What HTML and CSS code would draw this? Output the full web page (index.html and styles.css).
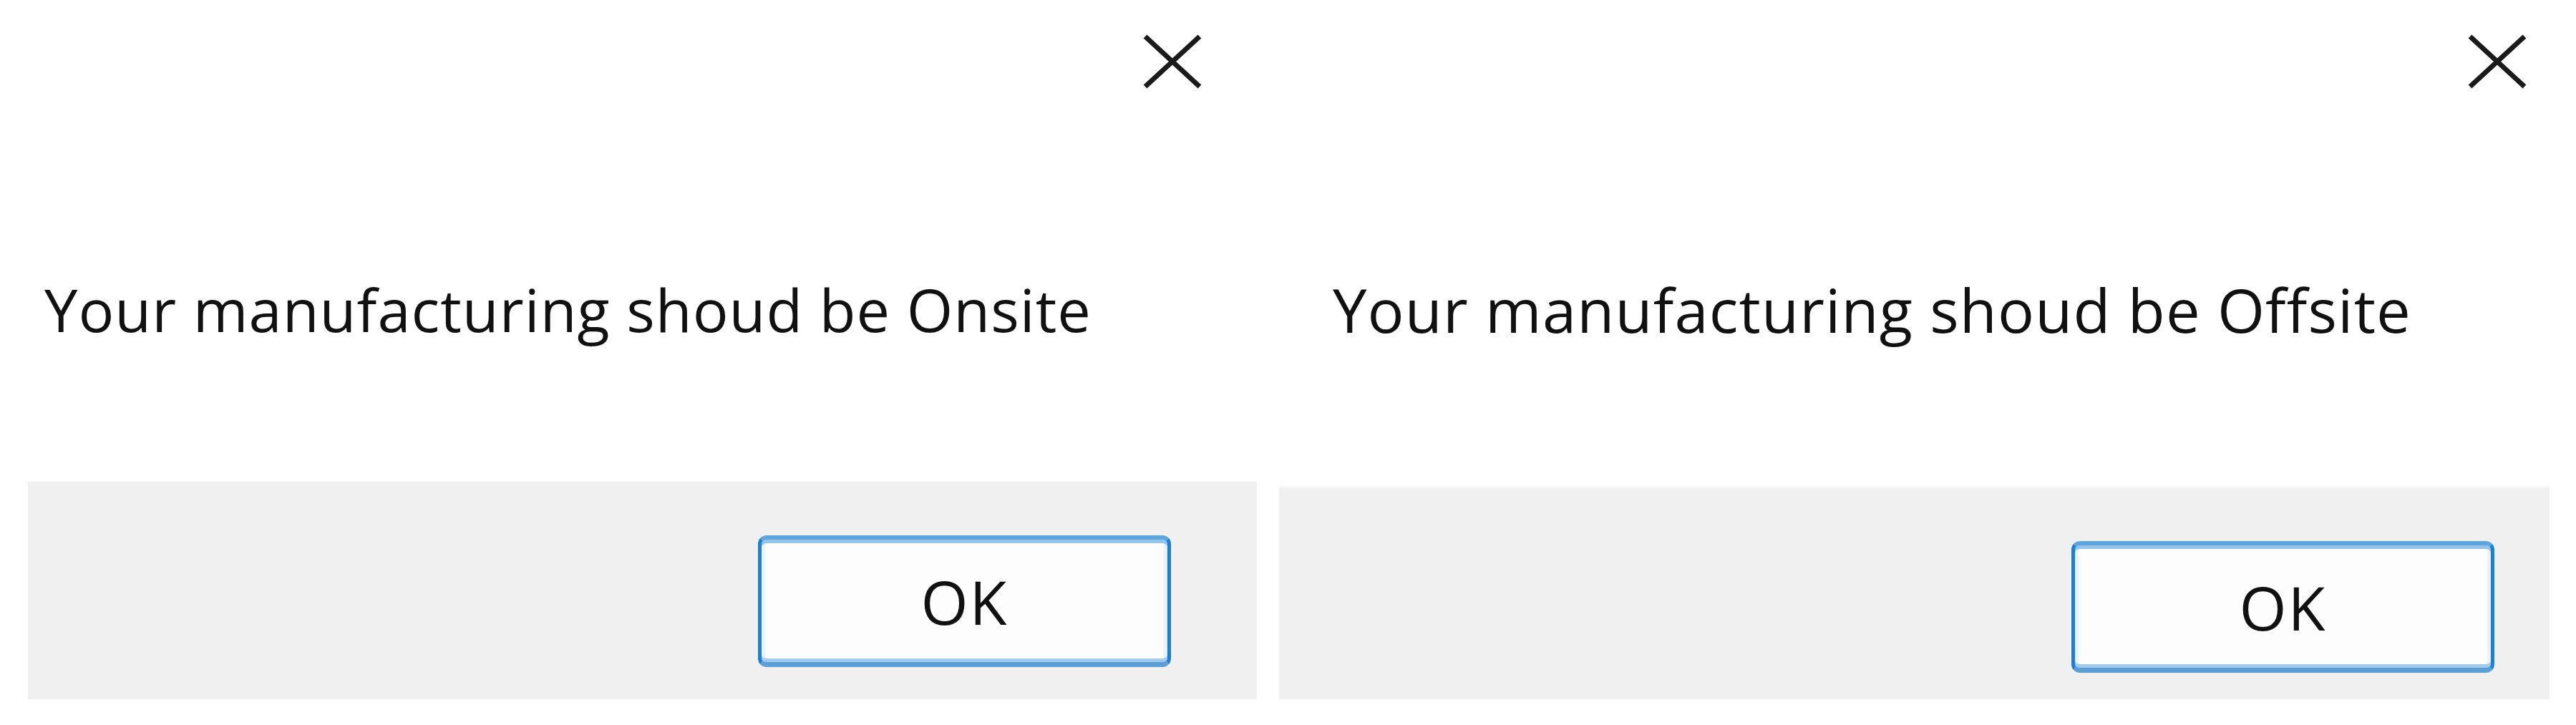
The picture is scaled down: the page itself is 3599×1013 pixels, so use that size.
FILE: index.html
```html
<!DOCTYPE html>
<html lang="en">
<head>
  <meta charset="UTF-8">
  <title>Manufacturing result</title>
  <link rel="stylesheet" href="styles.css">
</head>
<body>
  <div class="dialog onsite">
    <div class="dialog-head">
      <button class="close" aria-label="Close">
        <svg viewBox="0 0 82 76" width="82" height="76">
          <path d="M3 3 L79 73 M79 3 L3 73" />
        </svg>
      </button>
    </div>
    <p class="message">Your manufacturing shoud be Onsite</p>
    <div class="dialog-foot">
      <button class="ok">OK</button>
    </div>
  </div>

  <div class="dialog offsite">
    <div class="dialog-head">
      <button class="close" aria-label="Close">
        <svg viewBox="0 0 82 76" width="82" height="76">
          <path d="M3 3 L79 73 M79 3 L3 73" />
        </svg>
      </button>
    </div>
    <p class="message">Your manufacturing shoud be Offsite</p>
    <div class="dialog-foot">
      <button class="ok">OK</button>
    </div>
  </div>
</body>
</html>
```

FILE: styles.css
```css
:root {
  --text-color: #111;
  --foot-color: #f0f0f0;
  --accent: #1b7fd6;
  --accent-soft: #5ea4dd;
}

body {
  margin: 0;
  padding: 0 0 0 39px;
  background: #fff;
  color: var(--text-color);
  font-family: "Open Sans", "Noto Sans", sans-serif;
  display: flex;
  gap: 31px;
  height: 1013px;
  box-sizing: border-box;
}

.dialog {
  display: flex;
  flex-direction: column;
  height: 977px;
}

.dialog.onsite {
  width: 1717px;
}

.dialog.offsite {
  width: 1775px;
}

.dialog-head {
  display: flex;
  justify-content: flex-end;
  padding-top: 48px;
}

.onsite .dialog-head {
  padding-right: 77px;
}

.offsite .dialog-head {
  padding-right: 32px;
}

.close {
  background: none;
  border: none;
  padding: 0;
  display: block;
  cursor: pointer;
}

.close svg {
  display: block;
}

.close path {
  stroke: #1a1a1a;
  stroke-width: 7;
  fill: none;
}

.message {
  margin: 258px 0 0;
  font-size: 83px;
  line-height: 100px;
  white-space: nowrap;
  letter-spacing: 1px;
}

.onsite .message {
  padding-left: 23px;
}

.offsite .message {
  padding-left: 75px;
  font-size: 85px;
  letter-spacing: 1.1px;
}

.dialog-foot {
  margin-top: auto;
  background: var(--foot-color);
  display: flex;
  justify-content: flex-end;
  align-items: flex-start;
  box-sizing: border-box;
}

.onsite .dialog-foot {
  height: 304px;
  padding: 75px 120px 0 0;
}

.onsite .ok {
  width: 577px;
}

.offsite .dialog-foot {
  height: 298px;
  padding: 74px 77px 0 0;
  border-top: 3px solid #f7f7f7;
}

.offsite .ok {
  width: 591px;
}

.ok {
  height: 184px;
  background: #fdfdfd;
  border-style: solid;
  border-width: 6px 5px 7px;
  border-color: var(--accent-soft) var(--accent) #5b9fd6;
  border-radius: 12px;
  box-shadow: inset 0 5px 0 #92c3ea, inset 0 -5px 0 #a3cbeb, inset 5px 0 0 #e8f2fb, inset -5px 0 0 #e8f2fb;
  font-family: "Open Sans", "Noto Sans", sans-serif;
  font-size: 85px;
  color: var(--text-color);
  letter-spacing: 2px;
  cursor: pointer;
}
```
